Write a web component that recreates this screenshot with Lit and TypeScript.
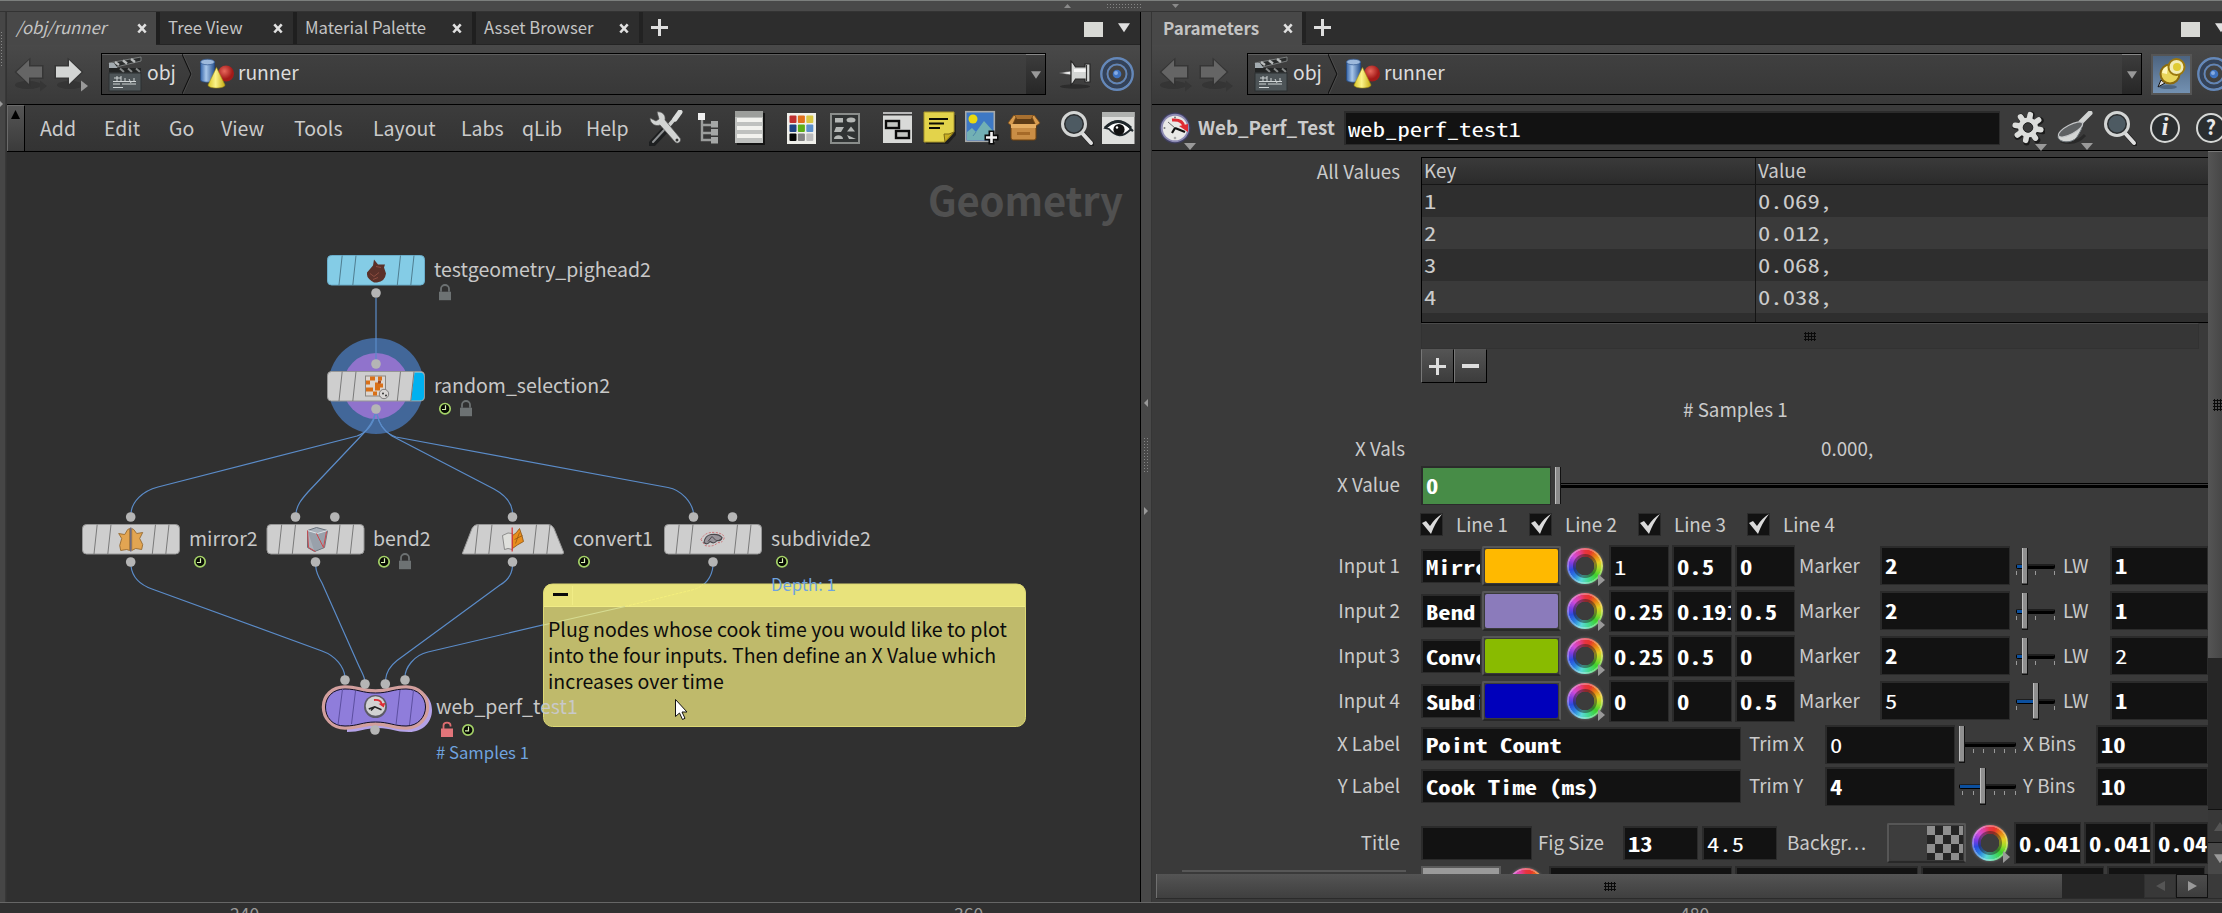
import { LitElement, html, svg, css, nothing } from "lit";
import { customElement } from "lit/decorators.js";
import { classMap } from "lit/directives/class-map.js";

/* ---------- icons ---------- */

const clapper = html`<svg class="ico" width="34" height="36" viewBox="0 0 34 36">
  <path d="M1 7 L33 1 L33 5 L4 12z" fill="#2a2c2c" stroke="#8c8f8f" stroke-width=".8"/>
  <path d="M7 6l4 3M15 4.5l4 3M23 3l4 3" stroke="#b9bcbc" stroke-width="2.4"/>
  <path d="M1 7h5l5 7H1z" fill="#a3abb0"/>
  <rect x="1" y="12" width="32" height="4.5" fill="#222424"/>
  <path d="M12 12.5l4 3.5M20 12.5l4 3.5M28 12.5l4 3.5" stroke="#858888" stroke-width="2"/>
  <rect x="1" y="17" width="32" height="18" fill="#4d5457" stroke="#2c3032"/>
  <path d="M6 22h7M9 20v5M13 20v6M5 25.500h23M17 22v4M21 23l2 4M26 22v4M5 28h7M14 28h14M5 31.500h10" stroke="#cfd4d5" stroke-width="1" fill="none"/>
</svg>`;

const shapes = html`<svg class="ico" width="36" height="32" viewBox="0 0 36 32">
  <defs>
    <linearGradient id="cy"><stop offset="0" stop-color="#3464a8"/><stop offset=".4" stop-color="#a9c7ea"/><stop offset="1" stop-color="#27528f"/></linearGradient>
    <radialGradient id="sp" cx=".4" cy=".35"><stop offset="0" stop-color="#e8685c"/><stop offset="1" stop-color="#a31a18"/></radialGradient>
    <linearGradient id="co"><stop offset="0" stop-color="#d9c527"/><stop offset=".45" stop-color="#fbf38a"/><stop offset="1" stop-color="#c6ac12"/></linearGradient>
  </defs>
  <path d="M1.500 4v18c0 3 14 3 14 0V4z" fill="url(#cy)" stroke="#264a80" stroke-width=".8"/>
  <ellipse cx="8.500" cy="4" rx="7" ry="2.800" fill="#9db9dc" stroke="#3a5f96" stroke-width=".8"/>
  <circle cx="27" cy="15.500" r="8" fill="url(#sp)"/>
  <path d="M17.500 9.500 L9 27 C9 31 26 31 26 27z" fill="url(#co)" stroke="#a38f14" stroke-width=".6"/>
</svg>`;

const arrow = (dir: "l" | "r", on: boolean) => html`<svg class="ico" width="36" height="38" viewBox="0 0 36 38">
  <g transform=${dir === "l" ? "translate(33 0) scale(-1 1)" : ""}>
    <ellipse cx="17" cy="30" rx="13" ry="4" fill="#2b2b2b" opacity=".5"/>
    <path d="M1.500 10h13V2.500l16 14.500-16 14.500V24h-13z" fill="#333" opacity=".8"/>
    <path d="M3 11.500h13V5l12.500 12-12.500 12V22.500H3z" fill=${on ? "#d3d5d4" : "#656565"}/>
  </g>
  <path d="M28 25.500v11l7-5.500z" fill=${on ? "#999" : "#363636"}/>
</svg>`;

const target = html`<svg class="ico" width="36" height="36" viewBox="0 0 36 36">
  <circle cx="18" cy="18" r="15.700" fill="none" stroke="#6488ba" stroke-width="2.400"/>
  <circle cx="18" cy="18" r="12.500" fill="none" stroke="#31425c" stroke-width="3"/>
  <circle cx="18" cy="18" r="9.500" fill="none" stroke="#6285b6" stroke-width="2"/>
  <circle cx="18" cy="18" r="4.300" fill="#3f73c0"/><circle cx="17" cy="17" r="2" fill="#86ace2"/>
</svg>`;

const pin = html`<svg class="ico" width="34" height="30" viewBox="0 0 34 30">
  <ellipse cx="17" cy="27.500" rx="15" ry="2.200" fill="#2c2c2c"/>
  <path d="M1 14l12-2v4z" fill="#eee" stroke="#444" stroke-width=".6"/>
  <path d="M13 2c2 1 3 4 4.500 6h9.500V5h5v18h-5v-3h-9.500c-1.500 2-2.500 5-4.500 6z" fill="#d4d6d5" stroke="#262626" stroke-width="1.200"/>
  <path d="M16 10h12v3H16z" fill="#f6f6f6"/><path d="M28.500 6v16" stroke="#333" stroke-width="1.200"/>
</svg>`;

const pinOn = html`<svg class="ico" width="32" height="34" viewBox="0 0 32 34">
  <ellipse cx="12" cy="30" rx="9" ry="2" fill="#40556e" opacity=".7"/>
  <path d="M2 30l3-7 4 3z" fill="#ddd" stroke="#111" stroke-width="1"/>
  <circle cx="14" cy="17" r="9.500" fill="#e9d65b" stroke="#8a6a10" stroke-width="2"/>
  <path d="M6 16a8 8 0 0 1 6-7l-1 8z" fill="#fff7bb"/>
  <circle cx="20.500" cy="10" r="8" fill="#f2ecb4" stroke="#9b780f" stroke-width="2"/>
  <circle cx="21" cy="10" r="4" fill="#dfcb34"/>
</svg>`;

const xIcon = html`<svg class="ico" width="10" height="11" viewBox="0 0 10 11"><path d="M1.300 1.300l7.400 8.200M8.700 1.300L1.300 9.500" stroke="#e0e0e0" stroke-width="2.600"/></svg>`;
const plusIcon = html`<svg class="ico" width="17" height="17" viewBox="0 0 17 17"><path d="M8.500 0v17M0 8.500h17" stroke="#dedede" stroke-width="3"/></svg>`;
const tri = (c = "#e0e0e0", w = 12) => html`<svg class="ico" width=${w} height=${w * 0.8} viewBox="0 0 12 9"><path d="M0 0h12L6 9z" fill=${c}/></svg>`;
const subTri = (cls: string) => html`<svg class="subtri ${cls}" width="12" height="7" viewBox="0 0 12 7"><path d="M0 0h12L6 7z" fill="#9a9a9a"/></svg>`;

const wrench = html`<svg class="ico" width="34" height="36" viewBox="0 0 34 36">
  <path d="M3 34l14-15" stroke="#1d1f20" stroke-width="7" stroke-linecap="round"/>
  <path d="M4 32l12-13" stroke="#8c8f91" stroke-width="2" stroke-linecap="round"/>
  <path d="M17 19L28 6" stroke="#cfd1d0" stroke-width="3.500"/><path d="M26 9l5-7" stroke="#dcdedd" stroke-width="5" stroke-linecap="round"/>
  <path d="M8 2c5-1 9 3 8 8l15 18c2 3-2 7-5 4L11 15C6 17 1 13 1 8l6 3 3-2z" fill="#d2d4d3" stroke="#555" stroke-width=".7"/>
  <circle cx="28" cy="30" r="1.500" fill="#333"/>
</svg>`;

const tree = html`<svg class="ico" width="24" height="32" viewBox="0 0 24 32">
  <path d="M5 8v20h9M5 13h9M5 21h9" fill="none" stroke="#9b9d9c" stroke-width="2.400"/>
  <rect x="1" y="1" width="7" height="7" fill="#f0f0f0"/>
  <rect x="14" y="9" width="7" height="6.500" fill="#a5a7a6"/><rect x="14" y="17" width="7" height="6.500" fill="#a5a7a6"/><rect x="14" y="25" width="7" height="6.500" fill="#a5a7a6"/>
</svg>`;

const listIco = html`<svg class="ico" width="30" height="34" viewBox="0 0 30 34">
  <rect x="2" y="2" width="28" height="32" fill="#141414"/><rect width="28" height="32" fill="#bfc1bf"/><rect width="28" height="6" fill="#9c9e9b"/>
  <rect x="2" y="7" width="25" height="4" fill="#f2f2ee"/><rect x="2" y="15" width="25" height="4" fill="#f2f2ee"/><rect x="2" y="23" width="25" height="4" fill="#f2f2ee"/>
</svg>`;

const palette = ["#bf3030", "#e0701c", "#d8c640", "#1d4383", "#5cae16", "#5b8fcb", "#060606", "#828282", "#bcbcbc"];
const gridIco = html`<svg class="ico" width="29" height="31" viewBox="0 0 29 31">
  <rect width="29" height="31" fill="#efefea"/>
  ${palette.map((c, i) => svg`<rect x=${2.5 + (i % 3) * 8.4} y=${2.5 + Math.floor(i / 3) * 9} width="7" height="7.500" rx="1" fill=${c}/>`)}
</svg>`;

const shapeGrid = html`<svg class="ico" width="30" height="31" viewBox="0 0 30 31">
  <rect x="1" y="1" width="28" height="29" fill="#303333" stroke="#8a8d8b" stroke-width="2"/>
  <g fill="#b4b7b5"><rect x="5" y="5" width="8" height="4.500"/><ellipse cx="21" cy="7" rx="4.500" ry="2.500"/>
  <path d="M6 14h8l-3 5H4zM17 18.500l4-5 4 5zM4 26c0-5 9-5 9 0zM17 22l9 4h-7z"/></g>
</svg>`;

const boxesIco = html`<svg class="ico" width="29" height="32" viewBox="0 0 29 32">
  <rect width="29" height="2" fill="#b8b8b8"/><rect y="3.500" width="29" height="27.500" fill="#d9dad8"/>
  <rect x="3" y="9" width="13" height="7" fill="#c2c4c1" stroke="#0b0b0b" stroke-width="2.400"/>
  <rect x="13" y="19" width="13" height="7" fill="#c2c4c1" stroke="#0b0b0b" stroke-width="2.400"/>
</svg>`;

const noteIco = html`<svg class="ico" width="34" height="34" viewBox="0 0 34 34">
  <path d="M3 4h30v20l-8 9H3z" fill="#111" opacity=".6"/>
  <path d="M1 1h30v20l-9 10H1z" fill="#e3d34b" stroke="#a8952a" stroke-width="1"/>
  <path d="M22 31l-1-8q5 1 10-2z" fill="#c9ae22" stroke="#7d6a14" stroke-width="1"/>
  <path d="M6 8h19M6 12.500h15M6 17h11" stroke="#0d0d05" stroke-width="2.200"/>
</svg>`;

const imageIco = html`<svg class="ico" width="35" height="36" viewBox="0 0 35 36">
  <rect x=".7" y="1.700" width="28.600" height="29.600" fill="#3d78c4" stroke="#a7a9a8" stroke-width="1.600"/>
  <circle cx="8" cy="9" r="4.500" fill="#e9d911"/>
  <path d="M2 30V22l5-4 4 4 8-11 9 10v9z" fill="#72b0b4"/><path d="M11 22l-3 4" stroke="#4f87a8"/>
  <path d="M26.500 20.500v14M19.500 27.500h14" stroke="#0b0b0b" stroke-width="6"/>
  <path d="M26.500 22v11M21 27.500h11" stroke="#f2f2f2" stroke-width="2.600"/>
</svg>`;

const crate = html`<svg class="ico" width="34" height="28" viewBox="0 0 34 28">
  <path d="M4 11h25v13q0 2-2 2H6q-2 0-2-2z" fill="#c98d45" stroke="#70420f" stroke-width="1"/>
  <path d="M7 1h20l2 9H5z" fill="#5e3c16"/>
  <path d="M7 1L1 9l4 3 4-9zM27 1l6 8-4 3-4-9z" fill="#d89c4f" stroke="#7a4b16" stroke-width=".8"/>
  <path d="M8 1h18l-2 4H10z" fill="#a87030"/><path d="M4 10h25v4H4z" fill="#e6ae63"/><rect x="10" y="18" width="13" height="3" fill="#a66a28"/>
</svg>`;

const magnify = html`<svg class="ico" width="34" height="36" viewBox="0 0 34 36">
  <path d="M22 23l9 10" stroke="#1d1d1d" stroke-width="5" stroke-linecap="round" transform="translate(1 1)"/>
  <path d="M22 23l9 10" stroke="#dedede" stroke-width="4" stroke-linecap="round"/>
  <circle cx="14" cy="14" r="11.500" fill="#2b2e30" stroke="#d3d5d4" stroke-width="3"/>
  <circle cx="14" cy="14" r="8.500" fill="#4d5a62"/>
</svg>`;

const eye = html`<svg class="ico" width="33" height="32" viewBox="0 0 33 32">
  <rect width="32.500" height="32" fill="#dfe0de"/><rect width="32.500" height="5" fill="#b0b2b0"/>
  <path d="M3 16q13-14 26 1l2 2-3-1q-11 11-21-1z" fill="#fff" stroke="#20282c" stroke-width="1.800"/>
  <path d="M3 16q13-13 26 0" stroke="#20282c" stroke-width="3" fill="none"/>
  <circle cx="17" cy="17.500" r="5.600" fill="#111"/><circle cx="15" cy="15.500" r="1.200" fill="#fff"/>
</svg>`;

const teeth = [10, 55, 100, 145, 190, 235, 280, 325];
const gear = html`<svg class="ico" width="34" height="36" viewBox="0 0 34 36">
  <g transform="translate(17 17.500)">
    <g stroke="#1b1b1b" stroke-width="6.500" stroke-linecap="round" transform="translate(1 1)">
      ${teeth.map((a) => svg`<path d="M0-7V-14" transform=${`rotate(${a})`}/>`)}</g>
    <g stroke="#dcdddb" stroke-width="5.600" stroke-linecap="round">
      ${teeth.map((a) => svg`<path d="M0-7V-13" transform=${`rotate(${a})`}/>`)}</g>
    <circle r="7.500" fill="none" stroke="#dcdddb" stroke-width="5"/><circle r="4.800" fill="#3a3a3a" stroke="#222" stroke-width="1"/>
  </g>
</svg>`;

const pan = html`<svg class="ico" width="36" height="34" viewBox="0 0 36 34">
  <path d="M4 30q14 5 24-6" stroke="#222" stroke-width="3" fill="none" opacity=".7"/>
  <path d="M24 11l9-9" stroke="#d2d4d3" stroke-width="5" stroke-linecap="round"/>
  <path d="M1 25C0 31 14 34 20 26q5-7 6-14z" fill="#d4d6d5" stroke="#6b7378" stroke-width="1"/>
  <ellipse cx="13.500" cy="18.500" rx="13.500" ry="4.500" transform="rotate(-28 13.500 18.500)" fill="#5e6163" stroke="#c4c6c8" stroke-width="1.200"/>
</svg>`;

const ring = (ch: string, cls: string) => html`<span class="ringicon ${cls}">${ch}</span>`;

const clockFace = svg`<circle r="15.500" fill="#3f3f60"/><circle r="14.200" fill="#8d8bb4"/><circle r="12.300" fill="#e9e9e7"/>
  <path d="M-3-8Q8-9 9-1" fill="none" stroke="#df2b33" stroke-width="3"/><path d="M4-2l9-2 0 8z" fill="#df2b33"/>
  <path d="M0 0L-7-6" stroke="#666" stroke-width="1"/><path d="M0 0l10 4M0 0l-3 5" stroke="#111" stroke-width="2.200"/>
  <circle cx="0" cy="-10.500" r="1" fill="#777"/><circle cx="-10.500" cy="0" r="1" fill="#777"/><circle cx="0" cy="10" r="1.300" fill="#aaa"/>`;

/* ---------- network graph ---------- */

interface GNode { x: number; y: number; cx: number; label: string; lx: number; badges: string; fill: string; ins: number[]; kind: string; }
const nodes: GNode[] = [
  { x: 327.5, y: 255.5, cx: 376, label: "testgeometry_pighead2", lx: 434, badges: "l", fill: "#84cce6", ins: [], kind: "pig" },
  { x: 327.5, y: 371.5, cx: 376, label: "random_selection2", lx: 434, badges: "cl", fill: "#cecece", ins: [376], kind: "random" },
  { x: 82.5, y: 524.5, cx: 130.7, label: "mirror2", lx: 189, badges: "c", fill: "#cecece", ins: [130.7], kind: "mirror" },
  { x: 267, y: 524.5, cx: 315.5, label: "bend2", lx: 373, badges: "cl", fill: "#cecece", ins: [295.5, 334.8], kind: "bend" },
  { x: 463.5, y: 524.5, cx: 512.5, label: "convert1", lx: 573, badges: "c", fill: "#cecece", ins: [512.5], kind: "convert" },
  { x: 664.5, y: 524.5, cx: 713, label: "subdivide2", lx: 771, badges: "c", fill: "#cecece", ins: [693.5, 732.5], kind: "subdiv" },
];

const glyph: Record<string, unknown> = {
  pig: svg`<path d="M-9 2L-3-5-2-11 2-6 9-6 8-3 10 3Q9 11 1 12L-2 12Q-9 8-9 4z" fill="#5b3129"/><path d="M-6 3l4 3 5-4M0-4l5 1M-3 9l5-2" stroke="#8c4c3f" fill="none"/>`,
  random: svg`<rect x="-10.500" y="-10.500" width="20" height="20" fill="#ddd6cf" stroke="#8a8580"/><path d="M-6-10h5v4h-5zM2-10h4v4H2zM-10-6h4v4h-4zM-10 1h7v4h-7zM-1-4h5v8h-5zM-3 5h4v4h-4zM4-3h3v4H4z" fill="#d97018"/><path d="M2-6h3v3H2z" fill="#a54a22"/><circle cx="8" cy="7.500" r="4.700" fill="#d9d6d4" stroke="#6c6a69" stroke-width=".8"/><circle cx="7" cy="7" r="1" fill="#333"/><circle cx="10" cy="9" r="1" fill="#333"/>`,
  mirror: svg`<path d="M-1-11v22l-3-1-6 1-1-5 2-7-3-5 6 1 3-5z" fill="#e2a552" stroke="#8e5f24" stroke-width=".8"/><path d="M1-11v22l4-2 6 1 1-5-3-6 3-6-6 1-3-4z" fill="#e2a552" stroke="#8e5f24" stroke-width=".8"/><path d="M0-12V12" stroke="#6e6a80" stroke-width="1.500"/>`,
  bend: svg`<path d="M-8-9L1-12 12-9 9 8-1 12-8 8z" fill="#a9b1ba" stroke="#67707a"/><path d="M-8-9L2-6 12-9 9 8-1 12z" fill="#8a929c" opacity=".5"/><path d="M-8-9L2-6 12-9" stroke="#dfe4e8" fill="none"/><path d="M-8-9L-7 8 0 12M1-6L8 8 11-8" stroke="#d0474c" fill="none"/>`,
  convert: svg`<path d="M-10-4Q-4-8 0-6V10Q-5 8-8 10z" fill="#dfe0dc" stroke="#777" stroke-width=".8"/><path d="M0-4Q4-6 7-11 10-3 11 2 5 5 0 9z" fill="#e78d1d" stroke="#8b520f" stroke-width=".8"/><path d="M2 0l8-4M3 4L7-7" stroke="#8b520f" stroke-width=".7"/><path d="M-.3-12v24" stroke="#d63a3a" stroke-width="1.300"/>`,
  subdiv: svg`<path d="M-12 0Q-8-8 2-7 12-6 11-1 9 4 5 3 0 8-8 6z" fill="none" stroke="#cf6f74" stroke-dasharray="2 1.500"/><path d="M-9 3Q-8-4-2-5 6-6 9-2 8 2 4 1 1 5-3 2-6 6-9 3z" fill="#99949a" stroke="#4a474c" stroke-width="1.200"/><path d="M-5 2l4-5 4 4" stroke="#4a474c" fill="none"/>`,
};

const lock = (x: number, y: number) => svg`<g transform=${`translate(${x} ${y})`}>
  <path d="M-4-1v-3a4 3.700 0 0 1 8 0v3" fill="none" stroke="#6c7172" stroke-width="1.800"/><rect x="-6" y="-1" width="12" height="8.500" fill="#6d7273"/></g>`;
const clock = (x: number, y: number) => svg`<g transform=${`translate(${x} ${y})`}>
  <circle r="5.200" fill="#070a04" stroke="#a4d267" stroke-width="1.700"/><path d="M.5-3.500V.8H-3" fill="none" stroke="#d8f0b0" stroke-width="1.200"/></g>`;

const drawNode = (n: GNode) => {
  const x = n.x, t = n.y, b = n.y + 29.5;
  const body = n.kind === "convert"
    ? `M462.500 ${b - 1}L472 ${t + 4}Q474 ${t} 478 ${t}H548Q552 ${t} 554 ${t + 4}L563.500 ${b - 2}Q564 ${b} 562 ${b}H464Q461.500 ${b} 462.500 ${b - 1}z`
    : `M${x + 4} ${t}h89q4 0 4 4v21.500q0 4-4 4h-89q-4 0-4-4V${t + 4}q0-4 4-4z`;
  const dark = n.kind === "pig" ? "#4f7d90" : "#7a7a7a";
  return svg`
    <path d=${body} fill=${n.fill} stroke=${n.kind === "pig" ? "#6aaecb" : "#969696"} stroke-width="1"/>
    ${n.kind === "random" ? svg`<path d=${`M${x + 87} ${t + 1}h5.500q4 0 4 4v20q0 4-4 4h-9z`} fill="#00b1f0"/>` : nothing}
    ${[14.7, 28.5, 73, 86.5].map((o) => svg`<path d=${`M${x + o} ${t}L${x + o - 3.2} ${b}`} stroke=${dark} stroke-width="1"/>`)}
    <g transform=${`translate(${n.cx} ${t + 15})`}>${glyph[n.kind]}</g>
    ${n.ins.map((i) => svg`<circle cx=${i} cy=${t - 7.5} r="4.800" fill="#b5b5b5"/>`)}
    <circle cx=${n.cx} cy=${b + 8} r="4.800" fill="#b5b5b5"/>
    <text class="nl" x=${n.lx} y=${t + 21.3}>${n.label}</text>
    ${[...n.badges].map((k, i) => (k === "l" ? lock : clock)(n.lx + 11 + i * 21, t + 37.2))}`;
};

const wires = [
  "M376 298V360",
  "M375 414C374 424 366 433 357 436L158 487C142 491 132 502 131 513",
  "M375 414C373 423 367 430 361 436L308 492C301 500 297 505 296 513",
  "M377 414C379 424 384 431 392 436L494 489C505 495 512 503 512.500 513",
  "M377 414C379 424 384 433 396 437L668 487.500C682 490 692 503 693.500 513",
  "M131 566C132 575 138 584 152 589L322 651C336 656 344 667 345 677",
  "M315.700 566C316 572 319 578 322 583L358 664C361 671 364 675 364.700 680",
  "M512.500 566C512 574 507 581 500 585L397 660.500C390 666 386 673 385.500 680",
  "M713 566C712 576 706 587 692 590L428 652C414 655 405 668 405 677",
];

/* ---------- parameter data ---------- */

const tableRows = [["1", "0.069,"], ["2", "0.012,"], ["3", "0.068,"], ["4", "0.038,"]];
const inputs = [
  { l: "Input 1", n: "Mirror", c: "#ffb900", v: [["1", 0], ["0.5", 1], ["0", 1]], m: ["2", 1], k: 6, w: ["1", 1] },
  { l: "Input 2", n: "Bend", c: "#8b7bbb", v: [["0.25", 1], ["0.191", 1], ["0.5", 1]], m: ["2", 1], k: 6, w: ["1", 1] },
  { l: "Input 3", n: "Convert", c: "#89bb00", v: [["0.25", 1], ["0.5", 1], ["0", 1]], m: ["2", 1], k: 6, w: ["2", 0] },
  { l: "Input 4", n: "Subdivide", c: "#0000bb", v: [["0", 1], ["0", 1], ["0.5", 1]], m: ["5", 0], k: 17, w: ["1", 1] },
] as const;

const field = (v: string, cls: string, bold: boolean | number = true) =>
  html`<span class=${"f " + cls + (bold ? " b" : "")}><em>${v}</em></span>`;

const wheel = html`<span class="wheel"><i></i><svg width="7" height="12" viewBox="0 0 7 12"><path d="M0 0v12l7-6z" fill="#999"/></svg></span>`;

const slider = (w: number, h: number, ticks: number[]) => html`<svg class="slider" width=${w + 3} height="38" viewBox=${`-1 0 ${w + 3} 38`}>
  <rect x="0" y="17" width=${w} height="5" rx="2" fill="#000"/><path d=${`M1 18H${w - 1}`} stroke="#3c3c3c"/>
  ${h > 1 ? svg`<rect x="1" y="18" width=${h} height="3" fill="#0b4f9e"/>` : nothing}
  ${ticks.map((t) => svg`<path d=${`M${t + 0.5} 24v4`} stroke="#999"/>`)}
  <rect x=${h} y="1" width="6" height="37" fill="#111"/><rect x=${h} y="1" width="5" height="35.500" fill="#8f8f8f"/><path d=${`M${h + 0.5} 1v35`} stroke="#c0c0c0"/>
</svg>`;

@customElement("app-root")
export class AppRoot extends LitElement {
  static styles = css`
    :host { display: block; width: 2222px; height: 913px; overflow: hidden; background: #3a3a3a; color: #cbcbcb;
      font-family: "Noto Sans CJK SC", "Noto Sans", sans-serif; font-size: 18.800px; line-height: 1; }
    * { box-sizing: border-box; }
    svg { display: block; flex: none; }
    .app { display: grid; height: 913px; grid-template: 12px 890px 11px / 6px 1135px 11px 1070px; }
    .top { grid-column: 1 / -1; background: #494949; border-top: 1px solid #7c7f7d; border-bottom: 1px solid #333; display: flex; align-items: center; padding-left: 1064px; }
    .grip-h { width: 35px; height: 6px; margin: 0 31px 0 35px; background: radial-gradient(circle, #858585 .8px, transparent 1px) 0 0 / 3px 3px; }
    .edge { background: #464646; border-right: 1px solid #383838; padding-top: 19px; }
    .edge i { display: block; width: 3px; height: 36px; background: radial-gradient(circle, #888 .8px, transparent 1px) 0 0 / 3px 3px; }
    .edge svg { margin-top: 34px; }
    .split { background: #484848; border-right: 1px solid #353535; display: flex; flex-direction: column; align-items: center; padding-top: 387px; }
    .split i { width: 6px; height: 35px; margin: 30px 0 35px; background: radial-gradient(circle, #858585 .8px, transparent 1px) 0 0 / 3px 3px; }
    .pane { display: flex; flex-direction: column; overflow: hidden; height: 890px; }
    .left { border-right: 1px solid #000; border-left: 1px solid #333; }
    .tabs { display: flex; height: 33px; background: #2d2d2d; border-bottom: 1px solid #242424; flex: none; }
    .tab { display: flex; align-items: center; justify-content: space-between; height: 32px; padding: 0 10px 0 8px; border-left: 4px solid #1f1f1f; color: #c4c4c4; font-size: 16.700px; flex: none; }
    .tab span { white-space: pre; padding-bottom: 2px; }
    .tab.on { height: 33px; background: #484848; border-left: 0; padding-left: 9px; padding-right: 9px; }
    .tab.bold { font-weight: 700; padding-left: 11px; font-size: 17px; }
    .slant { font-style: italic; }
    .tabs .end { margin-left: auto; display: flex; align-items: center; gap: 15px; padding-right: 10px; }
    .tabs .end.cut { padding-right: 0; margin-right: -5px; }
    .sq { width: 19px; height: 15px; background: #d8d9d5; margin-top: 2px; flex: none; }
    .plus { display: flex; align-items: center; padding-left: 8px; border-left: 4px solid #222; height: 31px; }
    .path { display: flex; align-items: center; height: 59px; padding-bottom: 1px; background: linear-gradient(#494949, #393939); flex: none; color: #dcdcdc; font-size: 19.300px; }
    .nav { display: flex; gap: 5px; padding-left: 5px; width: 94px; flex: none; }
    .nav.wide { width: 95px; }
    .crumb { display: flex; align-items: center; height: 42px; flex: none; padding-left: 6px; border: 1px solid #000; box-shadow: inset 0 1px #5e5e5e; background: linear-gradient(#404040, #383838); }
    .crumb .sep { margin: 0 7px 0 6px; }
    .crumb .t { margin-left: 5px; padding-bottom: 2px; }
    .crumb .t.k { margin-left: 3px; }
    .crumb .dd { margin-left: auto; width: 19px; height: 40px; background: linear-gradient(#3c3c3c, #272727); border-top: 1px solid #888; display: flex; align-items: center; justify-content: center; }
    .pinned { display: flex; margin: 0 4px 0 9px; align-items: center; justify-content: center; width: 41px; height: 41px; flex: none; border: 2px solid #555; background: linear-gradient(#4d6480, #7391b2); }
    .pushpin { margin: 0 7px 0 12px; }
    .menu { display: flex; height: 48px; border-top: 1px solid #000; border-bottom: 1px solid #000; background: linear-gradient(#3c3c3c, #333); flex: none; align-items: center; font-size: 19.500px; }
    .expander { width: 18px; height: 46px; background: linear-gradient(#555, #3b3b3b); border: 1px solid #6a6a6a; border-width: 1px 1px 0 1px; border-right: 1px solid #000; padding: 4px 0 0 3px; flex: none; }
    .words { display: grid; grid-template-columns: 64px 65px 52px 73px 79px 88px 61px 64px 63px; padding-left: 15px; flex: none; }
    .tools { display: grid; grid-template-columns: 48px 38px 52px 43px 53px 40px 42px 42px 53px 42px 34px; align-items: center; }
    .net { flex: 1; background: #303030; min-height: 0; }
    .nl { font-size: 19.500px; fill: #c8c8c8; }
    .bl { font-size: 16.700px; fill: #6fa3df; }
    .geo { font-size: 40px; font-weight: 700; fill: #505050; }
    .note { font-size: 19.530px; fill: #0c0c0c; }
    .timeline { grid-column: 1 / -1; background: #303030; border-top: 1px solid #666; display: grid; grid-template-columns: 230px 724px 726px 1fr; overflow: hidden; font-size: 17.500px; color: #9a9a9a; line-height: 18px; padding-top: 2px; }
    /* parameter pane */
    .head { display: grid; grid-template-columns: 46px 146px 667px 46px 46px 47px 46px 30px; align-items: center; height: 47px; border-top: 1px solid #000; border-bottom: 1px solid #000; background: #3b3b3b; flex: none; }
    .head b { font-size: 18.700px; white-space: pre; }
    .head > div { position: relative; }
    .head .face { padding-left: 7px; }
    .head .f { width: 656px; padding-left: 2px; }
    .subtri { position: absolute; right: 10px; bottom: -5px; }
    .subtri.near { right: 2px; }
    .ringicon { display: flex; width: 30px; height: 30px; border: 2px solid #d6d8d6; border-radius: 50%; align-items: center; justify-content: center; background: #2a2e30; color: #e8e8e8; font: bold 20px "Noto Sans CJK SC", sans-serif; line-height: 24px; padding-bottom: 2px; }
    .ringicon.i { font: italic bold 25px "Liberation Serif", serif; }
    .f { display: block; overflow: hidden; white-space: pre; background: #121212; border: 2px solid #2b2b2b; border-right-width: 1px; border-bottom-width: 1px; color: #fff; height: 39px; padding-left: 3px; line-height: 35px; }
    .f em, .mono em { display: block; font-style: normal; font-family: "Noto Sans Mono CJK SC", "Liberation Mono", monospace; font-size: 24.700px; line-height: inherit; transform: scaleY(.8); }
    .f.b { font-weight: 700; }
    .f.s { height: 34px; line-height: 30px; }
    .f.m { height: 42px; line-height: 38px; }
    .body { display: grid; grid-template-columns: 1056px 14px; grid-template-rows: 723px 1fr; flex: 1; min-height: 0; }
    .params { overflow: hidden; display: flex; flex-direction: column; background: #3a3a3a; }
    .row { display: grid; align-items: center; flex: none; }
    .row > span:not([class]), .lab { padding-bottom: 1px; white-space: pre; }
    .lab { text-align: right; padding-right: 21px; }
    .tbl { grid-template-columns: 269px 787px; height: 233px; align-items: start; padding-top: 6px; }
    .tbl .lab { padding-top: 5px; }
    .table { border: 1px solid #000; border-right: 0; height: 166px; overflow: hidden; }
    .tr { display: grid; grid-template-columns: 333px 1fr; height: 32px; background: #2e2e2e; }
    .tr:nth-child(odd) { background: #3a3a3a; }
    .tr:nth-child(1) { background: linear-gradient(#3a3a3a, #2b2b2b); height: 27px; border-bottom: 1px solid #161616; }
    .tr span { padding: 0 0 1px 2px; display: flex; align-items: center; }
    .tr span + span { border-left: 1px solid #141414; }
    .resz { width: 778px; height: 26px; border: 1px solid #323232; border-top-color: #4a4a4a; background: #363636; display: flex; align-items: center; justify-content: center; }
    .dots { width: 12px; height: 9px; background: radial-gradient(circle, #0a0a0a 1px, transparent 1.300px) 0 0 / 3px 3px; }
    .btns { display: flex; }
    .btn { width: 33px; height: 34px; border: 1px solid #000; border-left-color: #777; border-top-color: #555; background: linear-gradient(#545454, #3c3c3c); display: flex; align-items: center; justify-content: center; }
    .r-s { grid-template-columns: 531px 1fr; height: 52px; }
    .r-x { grid-template-columns: 669px 1fr; height: 25px; }
    .r-x .lab { width: 274px; }
    .r-v { grid-template-columns: 269px 134px 1fr; height: 48px; }
    .f.green { background: #478c47; width: 130px; }
    .track { display: flex; align-items: center; }
    .track i { width: 6px; height: 37px; background: linear-gradient(90deg, #c0c0c0 1px, #8b8b8b 1px 5px, #111 5px); }
    .track b { flex: 1; height: 5px; background: linear-gradient(#000 1px, #3c3c3c 1px 2px, #000 2px); }
    .r-c { grid-template-columns: 268px 36px 73px 36px 73px 36px 73px 36px 73px; height: 34px; padding-bottom: 3px; }
    .chk { width: 23px; height: 23px; background: #121212; border: 1px solid #2b2b2b; }
    .chk svg { margin: 0 0 0 1px; }
    .r-i { grid-template-columns: 269px 61px 82px 45px 63px 63px 64px 81px 135px 48px 47px 98px; height: 45px; }
    .r-i .f.n { width: 60px; } .r-i .mk { width: 130px; }
    .sw { display: block; width: 79px; height: 40px; border: 2px solid #565656; border-bottom-color: #282828; border-radius: 2px; padding: 1px; }
    .sw i { display: block; height: 100%; border-radius: 2px; }
    .wheel { position: relative; display: flex; align-items: center; justify-content: center; width: 42px; height: 40px; }
    .wheel i { width: 36px; height: 36px; border-radius: 50%; box-shadow: 0 0 3px #777; flex: none;
      background: radial-gradient(circle, #3c3c3c 9px, rgba(30,30,30,.45) 9.500px 11.500px, transparent 12.500px 16px, rgba(255,255,255,.3) 16.500px),
      conic-gradient(#e63440, #e6352c 20deg, #e87a14 45deg, #e6cf22 75deg, #a5dc28 100deg, #3fd02c 130deg, #44d98c 165deg, #59d8d8 195deg, #2b82de 225deg, #2b4ae0 255deg, #7a3ce2 280deg, #cf4bd8 310deg, #e0409e 335deg, #e63440); }
    .wheel svg { position: absolute; right: 1px; bottom: 0; }
    .r-l { grid-template-columns: 269px 328px 76px 133px 65px 73px 112px; height: 42px; }
    .r-l .w { width: 320px; } .r-l .q { width: 130px; }
    .r-t { grid-template-columns: 269px 117px 85px 79px 85px 100px 82px 45px 70px 69px 55px; height: 59px; padding-top: 13px; }
    .r-t .w1 { width: 111px; } .r-t .w2 { width: 75px; } .r-t .w3 { width: 67px; }
    .bg { display: grid; grid-template-columns: 1fr 1fr; }
    .bg i { background: #3d3d3d; }
    .bg i + i { background: conic-gradient(#242424 25%, #8e8e8e 0 50%, #242424 0 75%, #8e8e8e 0) 0 0 / 16px 18px; border-radius: 0; }
    .r-n { grid-template-columns: 30px 239px 109px 19px 186px 186px 186px 101px; align-items: start; height: 9px; overflow: hidden; }
    .r-n hr { margin: 4px 15px 0 0; border: 0; height: 2px; background: #575757; }
    .r-n .g { width: 80px; height: 20px; border: 2px solid #5a5a5a; background: #9a9a9a; }
    .r-n .f { margin-right: 3px; }
    .r-n .wheel { margin-left: -25px; }
    .vs { display: grid; grid-template-rows: 507px 151px 33px 32px; background: #262626; }
    .vs .th { background: linear-gradient(90deg, #555, #474747); border-top: 1px solid #777; display: flex; align-items: center; justify-content: center; padding: 0 0 0 4px; }
    .vs .th .dots { width: 9px; height: 12px; }
    .vs .bt { background: #484848; border-top: 1px solid #111; display: flex; align-items: center; padding-left: 6px; overflow: hidden; }
    .vs .bt.up { background: #383838; }
    .hs { grid-column: 1 / -1; display: grid; grid-template-columns: 906px 82px 32px 32px; height: 25px; margin-left: 4px; border-bottom: 1px solid #2b2b2b; }
    .hs .th { background: linear-gradient(#545454, #3f3f3f); border-left: 1px solid #707070; display: flex; align-items: center; justify-content: center; }
    .hs .tr2 { background: #262626; }
    .hs .bt { background: linear-gradient(#4c4c4c, #3d3d3d); border: 1px solid #111; display: flex; align-items: center; justify-content: center; }
    .hs .bt.off { background: #383838; border-color: #303030; }
  `;

  private crumb(width: number) {
    return html`<div class="crumb" style=${`width:${width}px`}>${clapper}<span class="t">obj</span>
      <svg class="sep" width="10" height="40" viewBox="0 0 10 40"><path d="M0 0l9 20L0 40" fill="none" stroke="#111" stroke-width="1.200"/><path d="M1 0l9 20L1 40" fill="none" stroke="#5a5a5a" stroke-width=".6"/></svg>
      ${shapes}<span class="t k">runner</span><span class="dd">${tri("#999", 10)}</span></div>`;
  }

  private graph() {
    return html`<svg width="1133" height="750" viewBox="7 152 1133 750">
      <text class="geo" x="928" y="215.500" textLength="195">Geometry</text>
      <circle cx="376" cy="386" r="48" fill="#426799"/><circle cx="376" cy="386" r="33" fill="#9073cc"/>
      ${wires.map((d) => svg`<path d=${d} fill="none" stroke="#5b8cc9" stroke-width="1.200"/>`)}
      ${nodes.map(drawNode)}
      <path d="M346 689C359 689 363 693 376.500 693S395 689 409 687C423 689 432 698 432 710S423 732 409 732 391 728 378 728 360 732 347 732z" fill="#b4a2e8"/>
      <path d="M345 687C358 687 362 691 375.500 691S393 687 406 687C419 687 427.500 696 427.500 707S419 728 406 728 389 724 375.500 724 358 728 345 728 323.500 718 323.500 707 332 687 345 687z" fill="#8f7ddb" stroke="#d29f9d" stroke-width="3.500"/>
      <path d="M345 689C358 689 362 693 375.500 693S393 689 406 689C418 689 425.500 697 425.500 707S418 726 406 726 389 722 375.500 722 358 726 345 726 325.500 717 325.500 707 333 689 345 689z" fill="none" stroke="#141020" stroke-width="1"/>
      <path d="M342.500 689l-4.500 36M355.500 691l-4 33M400 690l-4 35M413.500 690l-4 35" stroke="#5c4fa0"/>
      <circle cx="375.500" cy="706.500" r="11.500" fill="#5c5a66"/><g transform="translate(375.500 706) scale(.75)"><circle r="13" fill="#d2d2d2"/><path d="M-2-8Q8-9 8-2" fill="none" stroke="#df2b33" stroke-width="2.400"/><path d="M4-3l9-1-2 6z" fill="#df2b33"/><path d="M-9 4L-1 1l9 4M-1 1l-5 5" stroke="#222" stroke-width="2" fill="none"/></g>
      ${[[345, 680], [365, 684], [385.3, 684], [405, 680], [375, 730]].map(([x, y]) => svg`<circle cx=${x} cy=${y} r="4.800" fill="#b5b5b5"/>`)}
      <g transform="translate(447 730)"><path d="M-3.500-1V-4.500a3.500 2.800 0 0 1 7 0V-3.500" fill="none" stroke="#de6d70" stroke-width="1.800"/><rect x="-6" y="-1.500" width="12" height="8.500" fill="#e2757a"/></g>
      ${clock(468, 730)}
      <text class="bl" x="436" y="759">#&nbsp;Samples 1</text>
      <rect x="543.500" y="584" width="482" height="142.500" rx="9" fill="#bfba6b"/>
      <path d="M543.500 606.500V593q0-9 9-9H1016.500q9 0 9 9V606.500z" fill="#e8e37c"/>
      <path d="M543.500 606.500H1025.500M572.500 586v19" stroke="#f0ec86"/>
      <rect x="543.500" y="584" width="482" height="142.500" rx="9" fill="none" stroke="#dcd873"/>
      <path d="M543.500 625L625 606.500" stroke="#d6dc92" stroke-width="1.200"/><path d="M625 606.500L692 590Q700 588 703 584" stroke="#f4ef7c" fill="none" stroke-dasharray="3 1"/>
      <rect x="553" y="593" width="15" height="3" fill="#0a0a0a"/>
      <text class="note" x="548" y="636.500">Plug nodes whose cook time you would like to plot</text>
      <text class="note" x="548" y="663">into the four inputs. Then define an X Value which</text>
      <text class="note" x="548" y="689">increases over time</text>
      <text class="bl" x="771" y="590.500">Depth: 1</text>
      <text class="nl" x="436" y="713.500">web_perf_test1</text>
      <path d="M675.500 699.500v17l4-3.500 3 6.500 2.500-1.200-3-6.300h5z" fill="#fff" stroke="#111"/>
    </svg>`;
  }

  render() {
    const tabs = [["/obj/runner", 149], ["Tree View", 137], ["Material Palette", 179], ["Asset Browser", 167]] as const;
    const menu = ["Add", "Edit", "Go", "View", "Tools", "Layout", "Labs", "qLib", "Help"];
    const tools = [wrench, tree, listIco, gridIco, shapeGrid, boxesIco, noteIco, imageIco, crate, magnify, eye];
    const check = html`<span class="chk"><svg width="21" height="21" viewBox="0 0 21 21"><path d="M0 9l4-2 4 5Q13 4 20 0 13 9 9 20z" fill="#dadada"/></svg></span>`;
    return html`<div class="app">
      <div class="top"><svg width="7" height="4"><path d="M0 4h7L3.500 0z" fill="#8a8a8a"/></svg><div class="grip-h"></div><svg width="7" height="4"><path d="M0 0h7L3.500 4z" fill="#8a8a8a"/></svg></div>
      <div class="edge"><i></i><svg width="3" height="6"><path d="M0 0l3 3-3 3z" fill="#999"/></svg></div>
      <div class="pane left">
        <div class="tabs">
          ${tabs.map(([t, w], i) => html`<div class=${classMap({ tab: true, on: i === 0, slant: i === 0 })} style=${`width:${w}px`}><span>${t}</span>${xIcon}</div>`)}
          <div class="plus">${plusIcon}</div>
          <div class="end"><span class="sq"></span>${tri()}</div>
        </div>
        <div class="path"><div class="nav">${arrow("l", false)}${arrow("r", true)}</div>${this.crumb(945)}<span class="pushpin">${pin}</span>${target}</div>
        <div class="menu"><div class="expander"><svg width="9" height="9"><path d="M4.500 0L9 9H0z"/></svg></div>
          <div class="words">${menu.map((m) => html`<span>${m}</span>`)}</div>
          <div class="tools">${tools.map((t) => html`<span>${t}</span>`)}</div></div>
        <div class="net">${this.graph()}</div>
      </div>
      <div class="split"><svg width="4" height="8"><path d="M4 0v8L0 4z" fill="#999"/></svg><i></i><svg width="4" height="8"><path d="M0 0v8l4-4z" fill="#999"/></svg></div>
      <div class="pane">
        <div class="tabs"><div class="tab on bold" style="width:150px"><span>Parameters</span>${xIcon}</div><div class="plus">${plusIcon}</div>
          <div class="end cut"><span class="sq"></span>${tri()}</div></div>
        <div class="path"><div class="nav wide">${arrow("l", false)}${arrow("r", false)}</div>${this.crumb(895)}
          <span class="pinned">${pinOn}</span>${target}</div>
        <div class="head">
          <div class="face"><svg width="32" height="34" viewBox="-16 -17 32 34">${clockFace}</svg>${subTri("near")}</div>
          <b>Web_Perf_Test</b>${field("web_perf_test1", "s", 0)}
          <div>${gear}${subTri("")}</div><div>${pan}${subTri("")}</div>
          <div>${magnify}</div><div>${ring("i", "i")}</div><div>${ring("?", "q")}</div>
        </div>
        <div class="body">
          <div class="params">
            <div class="row tbl"><span class="lab">All Values</span><div>
              <div class="table"><div class="tr"><span>Key</span><span>Value</span></div>
                ${tableRows.map((r) => html`<div class="tr mono"><span><em>${r[0]}</em></span><span><em>${r[1]}</em></span></div>`)}
                <div class="tr"><span></span><span></span></div></div>
              <div class="resz"><div class="dots"></div></div>
              <div class="btns"><div class="btn">${plusIcon}</div><div class="btn"><svg width="17" height="4"><rect width="17" height="4" fill="#dedede"/></svg></div></div>
            </div></div>
            <div class="row r-s"><span></span><span>#&nbsp;Samples 1</span></div>
            <div class="row r-x"><span class="lab">X Vals</span><span>0.000,</span></div>
            <div class="row r-v"><span class="lab">X Value</span>${field("0", "green")}<div class="track"><i></i><b></b></div></div>
            <div class="row r-c"><span></span>${[1, 2, 3, 4].map((n) => html`${check}<span>Line ${n}</span>`)}</div>
            ${inputs.map((r) => html`<div class="row r-i"><span class="lab">${r.l}</span>${field(r.n, "s n")}
              <span class="sw"><i style=${`background:${r.c}`}></i></span>${wheel}
              ${r.v.map(([v, b]) => field(v, "m n", b))}<span>Marker</span>${field(r.m[0], "mk", r.m[1])}
              ${slider(39, r.k, [0, 19, 38])}<span>LW</span>${field(r.w[0], "", r.w[1])}</div>`)}
            <div class="row r-l"><span class="lab">X Label</span>${field("Point Count", "s w")}<span>Trim X</span>${field("0", "q", 0)}${slider(57, 0, [14, 24, 35, 45, 56])}<span>X Bins</span>${field("10", "")}</div>
            <div class="row r-l"><span class="lab">Y Label</span>${field("Cook Time (ms)", "s w")}<span>Trim Y</span>${field("4", "q")}${slider(57, 21, [3, 14, 35, 45, 56])}<span>Y Bins</span>${field("10", "")}</div>
            <div class="row r-t"><span class="lab">Title</span>${field("", "s w1")}<span>Fig Size</span>${field("13", "s w2")}${field("4.5", "s w2", 0)}<span>Backgr…</span>
              <span class="sw bg"><i></i><i></i></span>${wheel}${field("0.041", "m w3")}${field("0.041", "m w3")}${field("0.041", "m")}</div>
            <div class="row r-n"><span></span><hr><span class="g"></span>${wheel}<span class="f"></span><span class="f"></span><span class="f"></span><span class="f"></span></div>
          </div>
          <div class="vs"><div class="th"><div class="dots"></div></div><div></div><div class="bt up"><svg width="12" height="9"><path d="M0 9h12L6 0z" fill="#555"/></svg></div><div class="bt">${tri("#999")}</div></div>
          <div class="hs"><div class="th"><div class="dots"></div></div><div class="tr2"></div><div class="bt off"><svg width="9" height="10"><path d="M9 0v10L0 5z" fill="#555"/></svg></div><div class="bt"><svg width="9" height="10"><path d="M0 0v10l9-5z" fill="#999"/></svg></div></div>
        </div>
      </div>
      <div class="timeline"><span></span><span>240</span><span>360</span><span>480</span></div>
    </div>`;
  }
}
